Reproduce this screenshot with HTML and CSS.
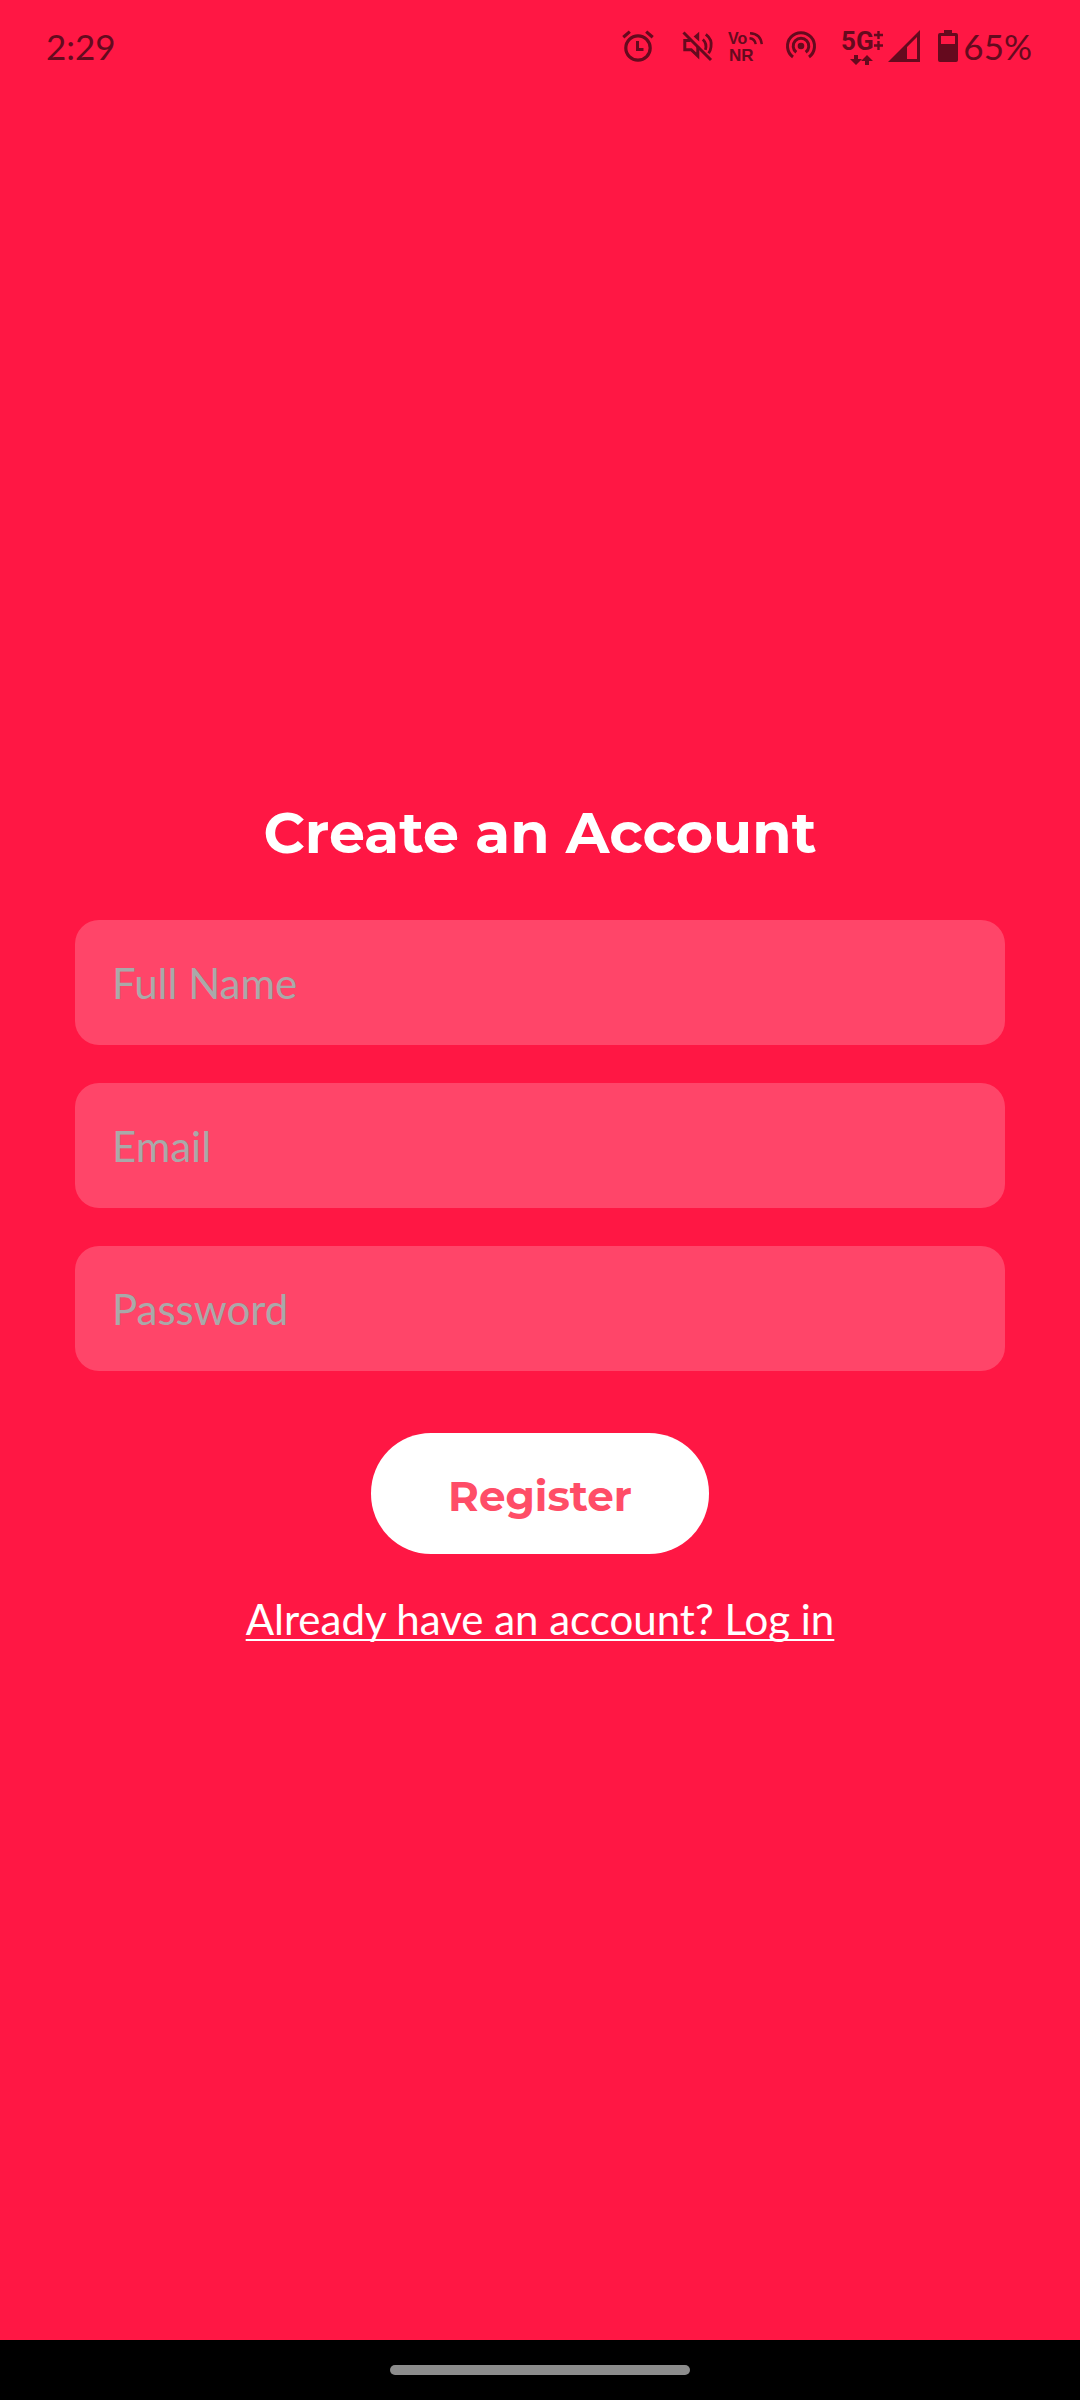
FILE: index.html
```html
<!DOCTYPE html>
<html lang="en">
<head>
<meta charset="utf-8">
<meta name="viewport" content="width=device-width, initial-scale=1">
<title>Create an Account</title>
<link rel="stylesheet" href="styles.css">
</head>
<body>
<div class="screen">
  <header class="status">
    <span class="clock">2:29</span>
    <div class="tray">
      <svg class="alarm" width="32" height="32" viewBox="0 0 32 32" role="img" aria-label="Alarm set">
        <g fill="none" stroke="currentColor">
          <circle cx="16" cy="18" r="12.2" stroke-width="3.2"/>
          <path d="M1.3 7.3 7.8 1.6M30.7 7.3 24.2 1.6" stroke-width="3.2"/>
          <path d="M15.5 11v8.5h6" stroke-width="3"/>
        </g>
      </svg>
      <svg class="mute" width="32" height="32" viewBox="0 0 32 32" role="img" aria-label="Muted">
        <g fill="none" stroke="currentColor" stroke-width="3">
          <path d="M1.5 2.5 29 30"/>
          <path d="M8.5 10.5H2.8v9.2h6.4l6.6 6.3V16.5"/>
          <path d="M20.8 9.5q4.5 4 2.6 10.3" stroke-width="2.8"/>
          <path d="M23.8 4.3q6.6 5 5.2 12.6-.4 3.6-2.4 6.4" stroke-width="2.8"/>
        </g>
        <path d="M17.2 1.8v9.6L11.6 6.4z" fill="currentColor"/>
      </svg>
      <svg class="vonr" width="36" height="40" viewBox="0 -4 36 40" role="img" aria-label="Voice over NR">
        <g class="glyphs">
          <text x="0" y="14" font-size="16">Vo</text>
          <text x="1" y="31" font-size="17">NR</text>
        </g>
        <g fill="none" stroke="currentColor" stroke-width="2.4">
          <path d="M21.5 8.2q5.500.4 6.200 6"/>
          <path d="M22 3.2q10.800.600 11.800 11"/>
        </g>
      </svg>
      <svg class="hotspot" width="32" height="32" viewBox="0 0 32 32" role="img" aria-label="Hotspot on">
        <circle cx="16" cy="16" r="3.3" fill="currentColor"/>
        <g fill="none" stroke="currentColor" stroke-width="3">
          <path d="M11.3 22.3A7.800 7.800 0 1 1 20.700 22.300"/>
          <path d="M8 27A13.500 13.500 0 1 1 24 27"/>
        </g>
      </svg>
      <svg class="network" width="44" height="44" viewBox="0 0 44 44" role="img" aria-label="5G data">
        <text class="band" x="0" y="26" font-size="26">5G</text>
        <path d="M33 11h9M37.500 7v8M33 21.500h9M37.500 17v9" fill="none" stroke="currentColor" stroke-width="2.4"/>
        <path d="M13 31h4v4h4L15 41l-6-6h4zM24 41h4v-4h4l-6-6-6 6h4z" fill="currentColor"/>
      </svg>
      <svg class="signal" width="32" height="32" viewBox="0 0 32 32" role="img" aria-label="Signal strength">
        <path fill="currentColor" fill-rule="evenodd" d="M32 0v32H0zM29 7 19 17v12h10z"/>
      </svg>
      <svg class="battery" width="20" height="32" viewBox="0 0 20 32" role="img" aria-label="Battery">
        <path fill="currentColor" fill-rule="evenodd" d="M6 0h8v3h4q2 0 2 2v25q0 2-2 2H2q-2 0-2-2V5q0-2 2-2h4zM3 6v8h14V6z"/>
      </svg>
      <span class="charge">65%</span>
    </div>
  </header>

  <main class="content">
    <form class="form">
      <h1 class="title">Create an Account</h1>
      <div class="fields">
        <input class="field" type="text" placeholder="Full Name" aria-label="Full Name">
        <input class="field" type="email" placeholder="Email" aria-label="Email">
        <input class="field" type="password" placeholder="Password" aria-label="Password">
      </div>
      <button class="submit" type="submit">Register</button>
      <a class="login" href="#login">Already have an account? Log in</a>
    </form>
  </main>

  <footer class="nav"><span class="handle"></span></footer>
</div>
</body>
</html>
```

FILE: styles.css
```css
* {
  box-sizing: border-box;
}

body {
  margin: 0;
  background: #ff1744;
  color: #fff;
  font-family: Lato, sans-serif;
}

.screen {
  display: flex;
  flex-direction: column;
  min-height: 100vh;
}

/* Status bar */
.status {
  display: flex;
  align-items: center;
  justify-content: space-between;
  height: 92px;
  padding: 0 48px 0 46px;
  color: #650a1e;
  font-size: 35px;
}

.tray {
  display: flex;
  align-items: center;
}

.mute {
  margin-left: 28px;
}

.vonr {
  margin-left: 14px;
}

.hotspot {
  margin-left: 21px;
}

.network {
  margin-left: 24px;
}

.signal {
  margin-left: 3px;
}

.battery {
  margin: 0 5px 0 18px;
}

.glyphs,
.band {
  fill: currentColor;
  font-family: "Liberation Sans", sans-serif;
  font-weight: 700;
}

.band {
  font-family: Roboto, sans-serif;
}

/* Registration form */
.content {
  display: flex;
  flex: 1;
  flex-direction: column;
  justify-content: center;
  padding: 10px 75px 0;
}

.form {
  display: flex;
  flex-direction: column;
  align-items: center;
}

.title {
  margin: 0 0 52px;
  font-family: Montserrat, Inter, sans-serif;
  font-size: 57px;
  line-height: 70px;
}

.fields {
  display: flex;
  flex-direction: column;
  gap: 38px;
  width: 100%;
}

.field {
  width: 100%;
  height: 125px;
  padding: 0 37px;
  border: 0;
  border-radius: 24px;
  background: rgba(255, 255, 255, 0.2);
  color: #fff;
  font-family: inherit;
  font-size: 42px;
}

.field::placeholder {
  color: #a9a9a9;
  opacity: 1;
}

.submit {
  margin: 62px 0 40px;
  padding: 35px 77px 29px;
  border: 0;
  border-radius: 60px;
  background: #fff;
  color: #ff4d67;
  font-family: Montserrat, Inter, sans-serif;
  font-size: 42px;
  font-weight: 700;
  line-height: 57px;
}

.login {
  color: #fff;
  font-size: 42px;
  line-height: 50px;
  text-decoration-thickness: 2px;
  text-decoration-skip-ink: none;
  text-underline-offset: 4px;
}

/* Gesture bar */
.nav {
  display: flex;
  align-items: center;
  justify-content: center;
  height: 60px;
  background: #000;
}

.handle {
  width: 300px;
  height: 10px;
  border-radius: 5px;
  background: #8c8c8c;
}
```
